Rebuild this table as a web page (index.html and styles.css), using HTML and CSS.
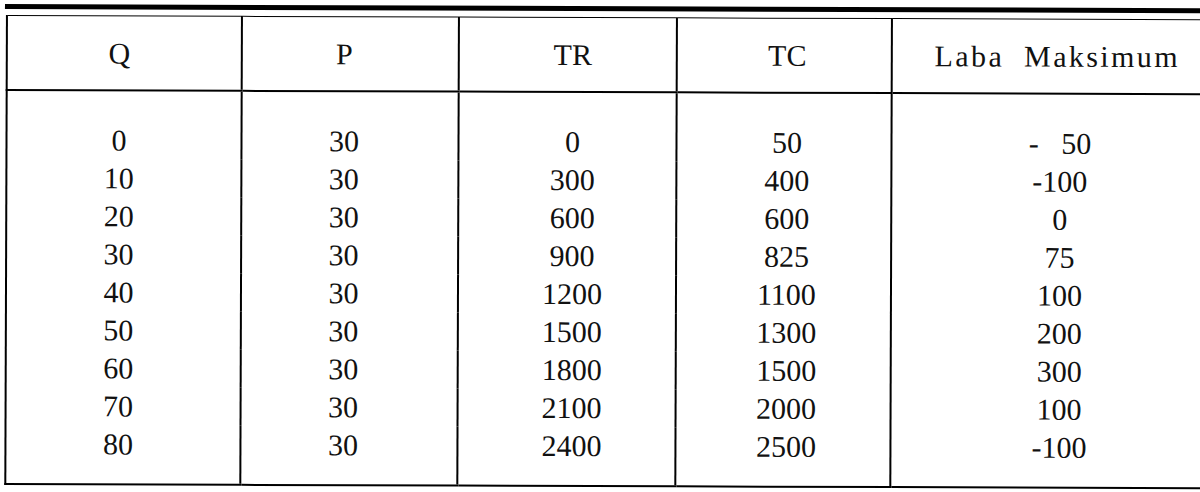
FILE: index.html
```html
<!DOCTYPE html>
<html lang="id">
<head>
    <meta charset="UTF-8">
    <title>Tabel Laba Maksimum</title>
    <link rel="stylesheet" href="styles.css">
</head>
<body>
    <div class="page">
        <div class="scan">
            <div class="rule-top"></div>
            <table class="tabel">
                <colgroup>
                    <col class="col-q">
                    <col class="col-p">
                    <col class="col-tr">
                    <col class="col-tc">
                    <col class="col-laba">
                </colgroup>
                <thead>
                    <tr>
                        <th>Q</th>
                        <th>P</th>
                        <th>TR</th>
                        <th>TC</th>
                        <th class="judul-laba">Laba Maksimum</th>
                    </tr>
                </thead>
                <tbody>
                    <tr class="first">
                        <td>0</td><td>30</td><td>0</td><td>50</td><td>-&nbsp;&nbsp;&nbsp;50</td>
                    </tr>
                    <tr>
                        <td>10</td><td>30</td><td>300</td><td>400</td><td>-100</td>
                    </tr>
                    <tr>
                        <td>20</td><td>30</td><td>600</td><td>600</td><td>0</td>
                    </tr>
                    <tr>
                        <td>30</td><td>30</td><td>900</td><td>825</td><td>75</td>
                    </tr>
                    <tr>
                        <td>40</td><td>30</td><td>1200</td><td>1100</td><td>100</td>
                    </tr>
                    <tr>
                        <td>50</td><td>30</td><td>1500</td><td>1300</td><td>200</td>
                    </tr>
                    <tr>
                        <td>60</td><td>30</td><td>1800</td><td>1500</td><td>300</td>
                    </tr>
                    <tr>
                        <td>70</td><td>30</td><td>2100</td><td>2000</td><td>100</td>
                    </tr>
                    <tr class="last">
                        <td>80</td><td>30</td><td>2400</td><td>2500</td><td>-100</td>
                    </tr>
                </tbody>
            </table>
        </div>
    </div>
</body>
</html>
```

FILE: styles.css
```css
/* Halaman */
body {
    margin: 0;
    padding: 0;
    background: #fff;
    color: #111;
    font-family: "Liberation Serif", "Times New Roman", serif;
}

.page {
    width: 1200px;
    height: 492px;
    overflow: hidden;
}

/* hasil scan sedikit miring */
.scan {
    padding-top: 4px;
    transform: rotate(0.2deg);
    transform-origin: 0 0;
}

/* Garis atas tebal */
.rule-top {
    height: 5px;
    background: #000;
    margin-left: 5px;
    margin-bottom: 6px;
    width: 1240px;
}

/* Tabel */
.tabel {
    border-collapse: collapse;
    margin-left: 6px;
    width: 1224px;
    table-layout: fixed;
    font-size: 30px;
}

.col-q { width: 235px; }
.col-p { width: 217px; }
.col-tr { width: 218px; }
.col-tc { width: 215px; }

.tabel th {
    font-weight: normal;
    height: 73px;
    padding: 0;
    border-top: 1px solid #000;
    border-bottom: 2px solid #000;
    text-align: center;
    vertical-align: middle;
}

.tabel th,
.tabel td {
    border-left: 2px solid #000;
}

.judul-laba {
    letter-spacing: 2.4px;
    word-spacing: 10px;
}

.tabel td {
    text-align: center;
    padding: 0;
    height: 38px;
    line-height: 38px;
}

/* geser sedikit seperti aslinya */
.tabel th:nth-child(1),
.tabel td:nth-child(1) {
    padding-right: 10px;
}

.tabel th:nth-child(2),
.tabel td:nth-child(2) {
    padding-right: 12px;
}

.tabel th:nth-child(3),
.tabel td:nth-child(3) {
    padding-left: 10px;
}

.tabel th:nth-child(4),
.tabel td:nth-child(4) {
    padding-left: 6px;
}

.tabel th:nth-child(5) {
    padding-right: 8px;
}

.tabel td:nth-child(5) {
    padding-right: 2px;
}

.tabel tr.first td {
    padding-top: 30px;
}

.tabel tr.last td {
    padding-bottom: 20px;
    border-bottom: 2px solid #000;
}
```
